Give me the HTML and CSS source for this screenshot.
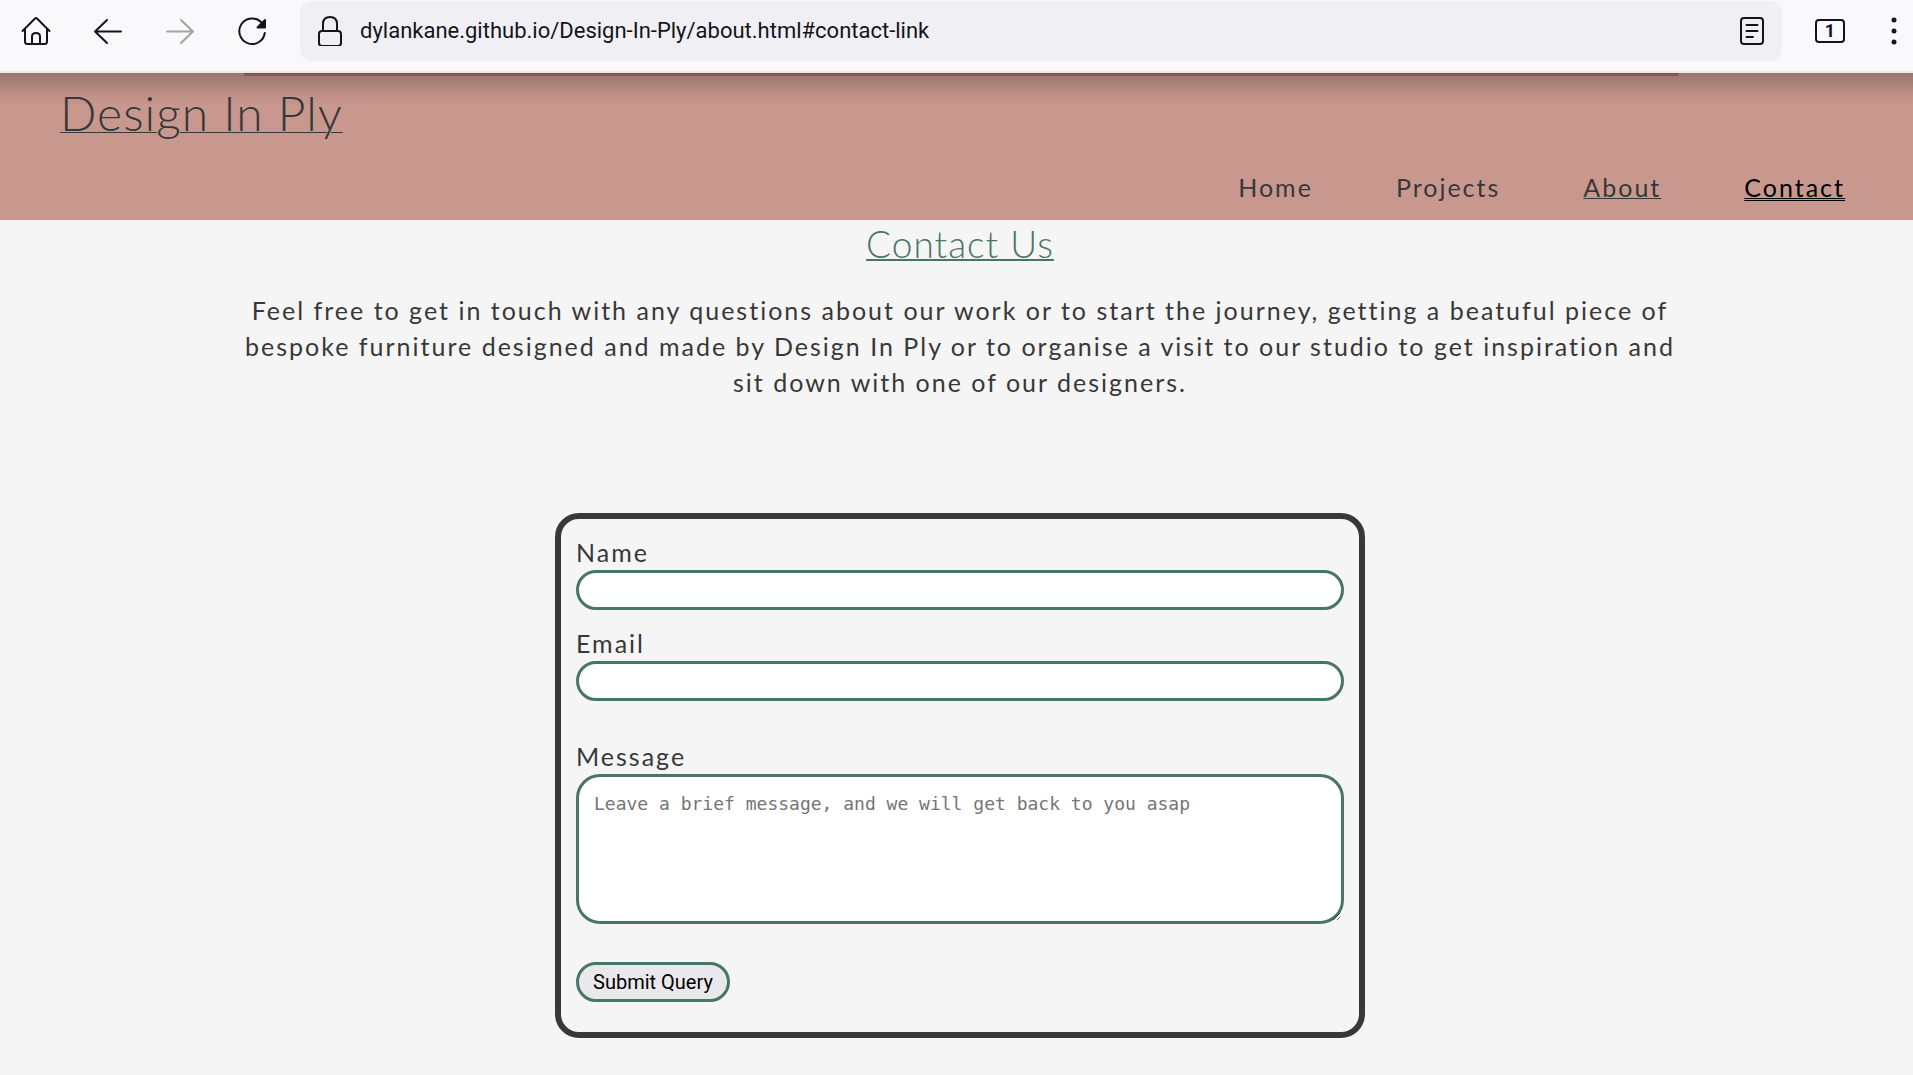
FILE: index.html
```html
<!DOCTYPE html>
<html lang="en">
<head>
<meta charset="utf-8">
<meta name="viewport" content="width=device-width, initial-scale=1">
<title>Design In Ply</title>
<link rel="stylesheet" href="styles.css">
</head>
<body>
<div class="toolbar">
  <div class="tools">
    <button class="tool" type="button" aria-label="Home">
      <svg class="icon" viewBox="0 0 30 30"><path d="M1.500 15 L14 2.500 Q15 1.500 16 2.500 L28.500 15 M4 13 V25.500 Q4 28 6.500 28 H23.500 Q26 28 26 25.500 V13 M11 28 V20.500 Q11 17 15 17 Q19 17 19 20.500 V28"/></svg>
    </button>
    <button class="tool" type="button" aria-label="Back">
      <svg class="icon" viewBox="0 0 30 30"><path d="M28 15.500 H2 M14 4 L2 15.500 L14 27"/></svg>
    </button>
    <button class="tool tool-off" type="button" aria-label="Forward" disabled>
      <svg class="icon" viewBox="0 0 30 30"><path d="M2 15.500 H28 M16 4 L28 15.500 L16 27"/></svg>
    </button>
    <button class="tool" type="button" aria-label="Reload">
      <svg class="icon" viewBox="0 0 30 30"><path d="M24.500 6.500 A12.800 12.800 0 1 0 27.800 17"/><path class="solid" d="M28 4 V11.500 H20.500 Z"/></svg>
    </button>
  </div>
  <div class="address">
    <svg class="icon" viewBox="0 0 30 30"><rect x="4" y="15" width="22" height="15" rx="3"/><path d="M8 15 V8 Q8 1 15 1 Q22 1 22 8 V15"/></svg>
    <input class="url" type="text" aria-label="Address" value="dylankane.github.io/Design-In-Ply/about.html#contact-link">
    <button class="tool" type="button" aria-label="Reader view">
      <svg class="icon" viewBox="0 0 30 30"><rect x="4" y="2" width="22" height="26" rx="3"/><path d="M9.500 9 H20.500 M9.500 15 H20.500 M9.500 21 H16"/></svg>
    </button>
  </div>
  <button class="tabs" type="button" aria-label="Open tabs">1</button>
  <button class="tool" type="button" aria-label="Menu">
    <svg class="icon" viewBox="0 0 30 30"><g class="dots"><circle cx="15" cy="4" r="2.500"/><circle cx="15" cy="15" r="2.500"/><circle cx="15" cy="26" r="2.500"/></g></svg>
  </button>
</div>

<header class="header">
  <a class="logo" href="#">Design In Ply</a>
  <nav class="nav">
    <a class="nav-link" href="#">Home</a>
    <a class="nav-link" href="#">Projects</a>
    <a class="nav-link current" href="#">About</a>
    <a class="nav-link active" href="#contact">Contact</a>
  </nav>
</header>

<main class="main" id="contact">
  <h2 class="title">Contact Us</h2>
  <p class="intro">Feel free to get in touch with any questions about our work or to start the journey, getting a beatuful piece of bespoke furniture designed and made by Design In Ply or to organise a visit to our studio to get inspiration and sit down with one of our designers.</p>
  <form class="form">
    <label class="label" for="name">Name</label>
    <input class="field" id="name" type="text">
    <label class="label label-next" for="email">Email</label>
    <input class="field" id="email" type="email">
    <label class="label label-message" for="message">Message</label>
    <textarea class="field message" id="message" placeholder="Leave a brief message, and we will get back to you asap"></textarea>
    <button class="submit" type="submit">Submit Query</button>
  </form>
</main>
</body>
</html>
```
FILE: styles.css
```css
* { box-sizing: border-box; }

body {
  margin: 0;
  background: #f5f5f5;
  color: #383838;
  font: 25px/36px Lato, sans-serif;
  letter-spacing: 2px;
}

button, input, textarea { margin: 0; font: inherit; letter-spacing: normal; }

/* Browser bar */
.toolbar {
  display: flex;
  align-items: center;
  height: 73px;
  padding: 1px 4px 11px 21px;
  background: #f9f9fb;
  border-bottom: 2px solid #efe9ec;
  color: #15141a;
  font-family: Roboto, sans-serif;
  letter-spacing: normal;
}
.tools { display: flex; gap: 42px; margin-right: 33px; }
.tool { display: block; padding: 0; border: 0; background: none; color: inherit; }
.tool-off { color: #a3a3a6; }
.icon {
  display: block;
  flex: none;
  width: 30px;
  height: 30px;
  fill: none;
  stroke: currentColor;
  stroke-width: 2;
  stroke-linecap: round;
  stroke-linejoin: round;
}
.solid { fill: currentColor; }
.dots { fill: currentColor; stroke: none; }
.address {
  flex: 1;
  display: flex;
  align-items: center;
  gap: 15px;
  height: 60px;
  padding: 0 15px;
  border-radius: 12px;
  background: #f0eff4;
}
.url {
  flex: 1;
  min-width: 0;
  padding: 0;
  border: 0;
  background: none;
  color: inherit;
  font-size: 22px;
}
.tabs {
  width: 30px;
  height: 24px;
  margin: 0 34px 0 33px;
  padding: 0;
  border: 2px solid currentColor;
  border-radius: 4px;
  background: none;
  color: inherit;
  font-size: 18px;
  font-weight: 700;
  line-height: 20px;
}

/* Site header */
.header {
  display: flex;
  flex-direction: column;
  gap: 26px;
  padding: 10px 68px 15px 60px;
  background:
    linear-gradient(rgba(90, 30, 30, .35), rgba(90, 30, 30, .35)) 51% 0 / 75% 3px no-repeat,
    linear-gradient(rgba(50, 45, 35, .3), rgba(50, 45, 35, .22) 10px, rgba(50, 45, 35, .05) 23px, transparent 34px),
    #c8978e;
}
.logo {
  align-self: flex-start;
  color: #383838;
  font-size: 48px;
  font-weight: 300;
  line-height: 60px;
  letter-spacing: 1px;
  text-decoration-thickness: 1px;
}
.nav { display: flex; justify-content: flex-end; gap: 83px; }
.nav-link { color: #383838; text-decoration: none; }
.current { text-decoration: underline 1px; }
.active { color: #000; text-decoration: underline double 1px; }

/* Contact section */
.main {
  display: flex;
  flex-direction: column;
  align-items: center;
  padding: 0 0 37px 7px;
}
.title {
  margin: 0 0 24px;
  color: #497565;
  font-size: 37px;
  font-weight: 300;
  line-height: 48px;
  letter-spacing: 1px;
  text-decoration: underline 2px;
}
.intro { width: 76%; margin: 0 0 113px; text-align: center; }
.form {
  display: flex;
  flex-direction: column;
  width: 100%;
  max-width: 810px;
  padding: 15px 15px 30px;
  border: 6px solid #383838;
  border-radius: 24px;
}
.label-next { margin-top: 15px; }
.label-message { margin-top: 37px; }
.field {
  height: 40px;
  padding: 0 15px;
  border: 3px solid #497565;
  border-radius: 24px;
  background: #fff;
  font-size: 20px;
}
.message {
  height: 150px;
  padding: 15px;
  font: 18px/24px "DejaVu Sans Mono", monospace;
}
.message::placeholder { color: #757575; }
.submit {
  align-self: flex-start;
  height: 40px;
  margin-top: 38px;
  padding: 0 14px;
  border: 3px solid #497565;
  border-radius: 20px;
  background: #e9e9ed;
  color: #000;
  font: 20px/34px Roboto, sans-serif;
}
```
